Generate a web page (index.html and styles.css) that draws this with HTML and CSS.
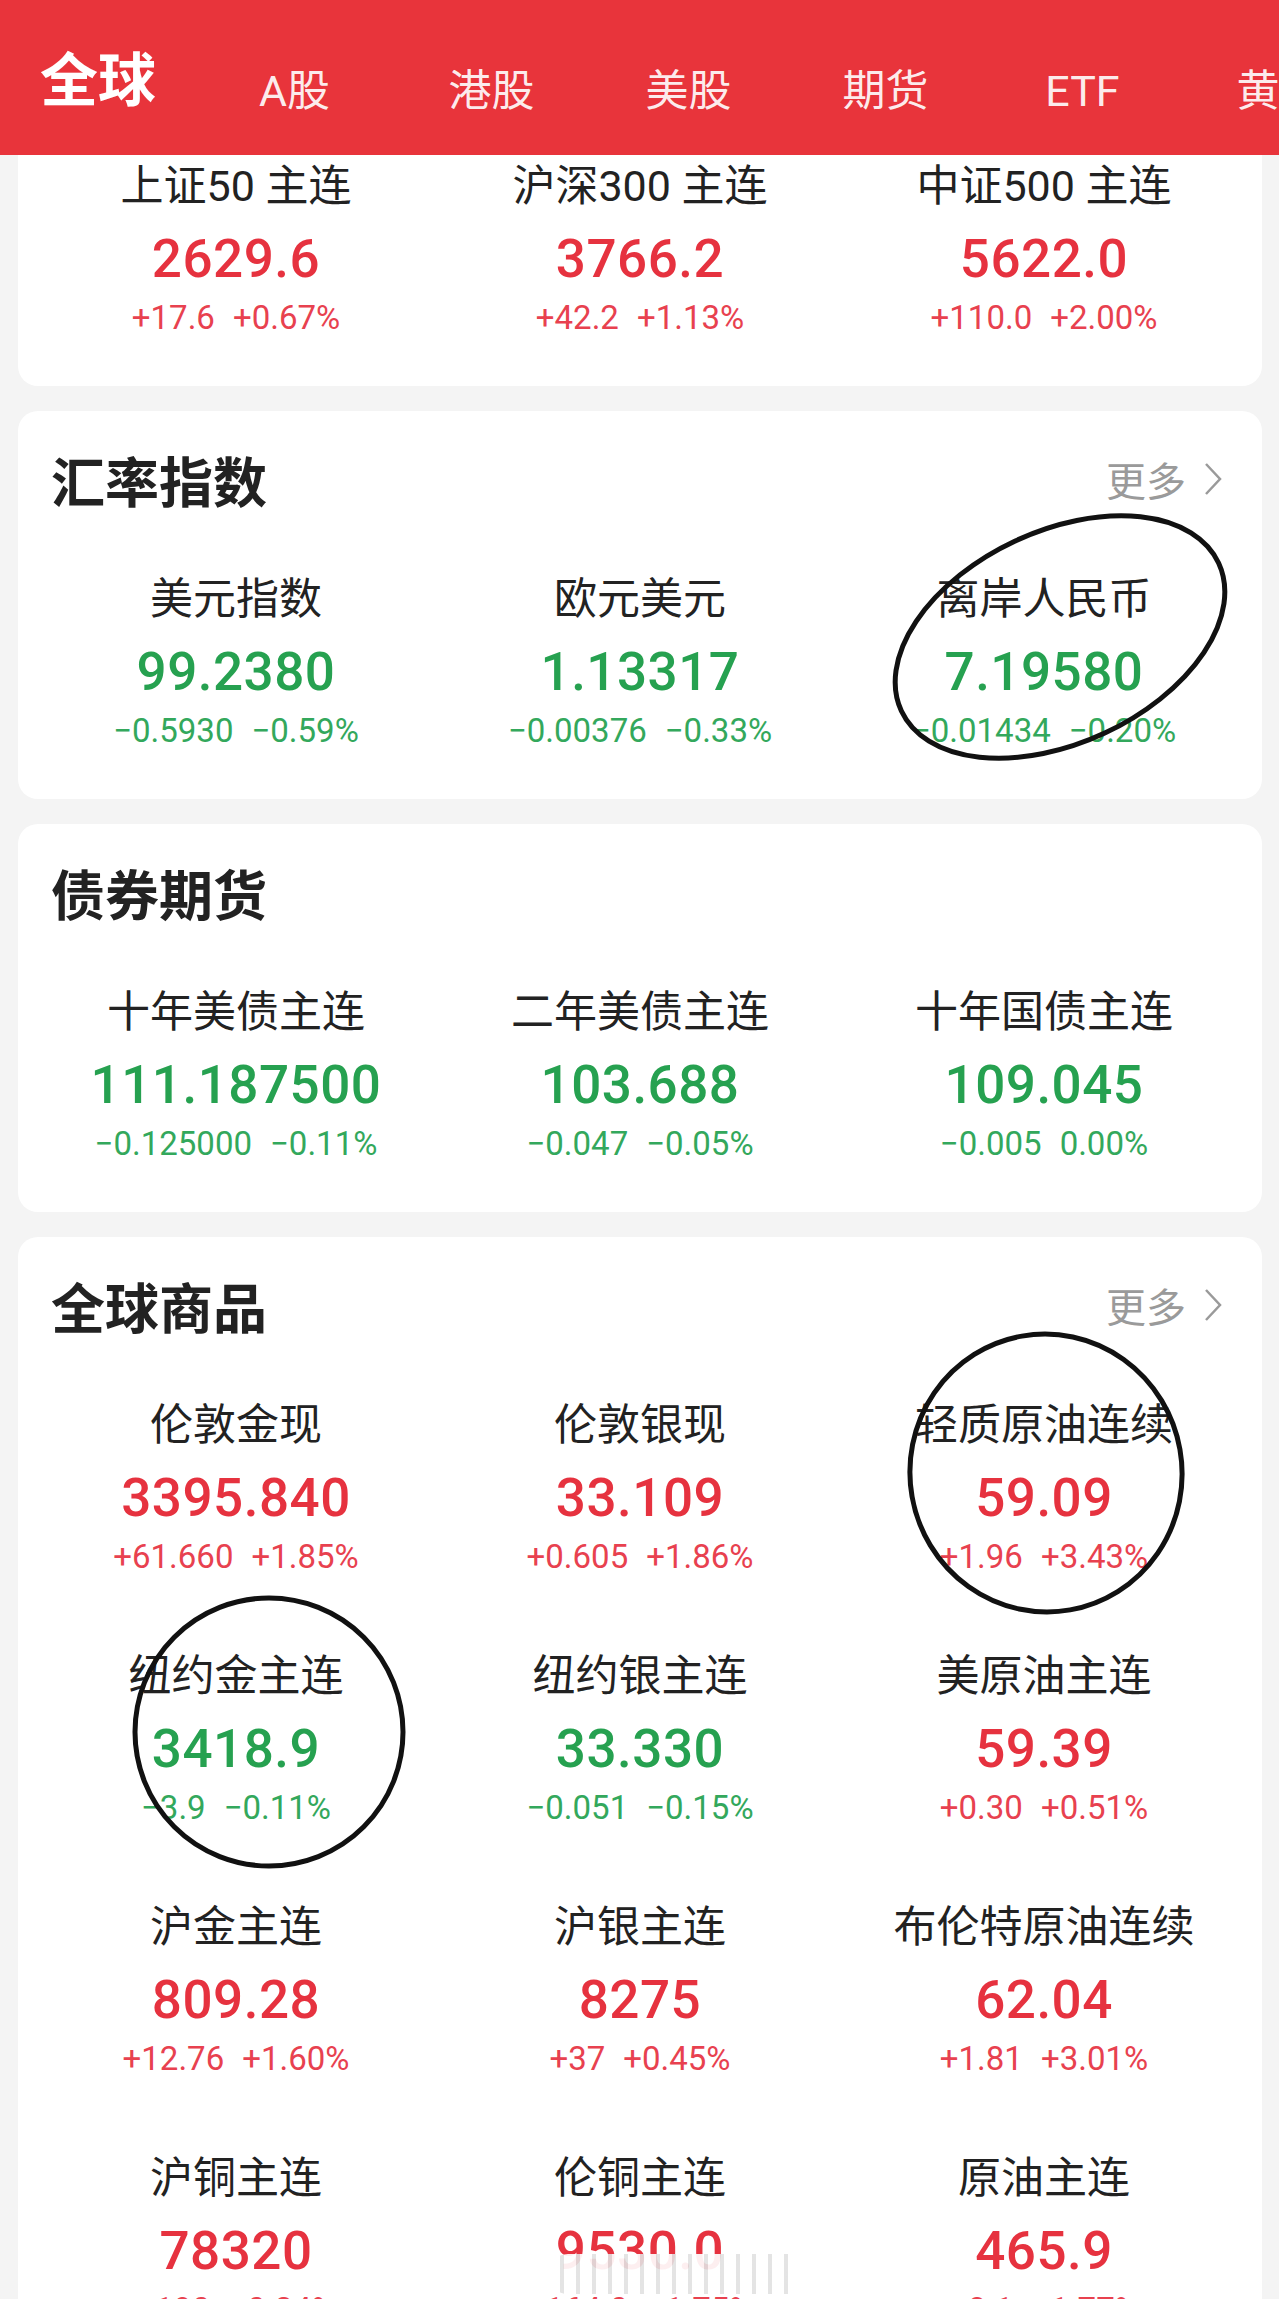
FILE: index.html
```html
<!DOCTYPE html>
<html lang="zh-CN">
<head>
    <meta charset="UTF-8">
    <meta name="viewport" content="width=device-width, initial-scale=1.0">
    <title>全球行情</title>
    <link rel="stylesheet" href="styles.css">
</head>
<body>
    <div class="topbar">
        <span class="brand">全球</span>
        <span class="tab">A股</span>
        <span class="tab">港股</span>
        <span class="tab">美股</span>
        <span class="tab">期货</span>
        <span class="tab">ETF</span>
        <span class="tab">黄金</span>
    </div>

    <div class="page">
        <!-- 股指期货 (已滚动, 标题被遮住) -->
        <section class="card card-first">
            <div class="grid">
                <div class="item up">
                    <div class="name">上证50 主连</div>
                    <div class="price">2629.6</div>
                    <div class="chg"><span>+17.6</span><span>+0.67%</span></div>
                </div>
                <div class="item up">
                    <div class="name">沪深300 主连</div>
                    <div class="price">3766.2</div>
                    <div class="chg"><span>+42.2</span><span>+1.13%</span></div>
                </div>
                <div class="item up">
                    <div class="name">中证500 主连</div>
                    <div class="price">5622.0</div>
                    <div class="chg"><span>+110.0</span><span>+2.00%</span></div>
                </div>
            </div>
        </section>

        <section class="card">
            <div class="card-head">
                <h2>汇率指数</h2>
                <a class="more">更多
                    <svg width="22" height="36" viewBox="0 0 22 36"><polyline points="4,3 18,18 4,33" fill="none" stroke="#9a9a9a" stroke-width="2.5"/></svg>
                </a>
            </div>
            <div class="grid">
                <div class="item down">
                    <div class="name">美元指数</div>
                    <div class="price">99.2380</div>
                    <div class="chg"><span>−0.5930</span><span>−0.59%</span></div>
                </div>
                <div class="item down">
                    <div class="name">欧元美元</div>
                    <div class="price">1.13317</div>
                    <div class="chg"><span>−0.00376</span><span>−0.33%</span></div>
                </div>
                <div class="item down">
                    <div class="name">离岸人民币</div>
                    <div class="price">7.19580</div>
                    <div class="chg"><span>−0.01434</span><span>−0.20%</span></div>
                </div>
            </div>
        </section>

        <section class="card">
            <div class="card-head">
                <h2>债券期货</h2>
            </div>
            <div class="grid">
                <div class="item down">
                    <div class="name">十年美债主连</div>
                    <div class="price">111.187500</div>
                    <div class="chg"><span>−0.125000</span><span>−0.11%</span></div>
                </div>
                <div class="item down">
                    <div class="name">二年美债主连</div>
                    <div class="price">103.688</div>
                    <div class="chg"><span>−0.047</span><span>−0.05%</span></div>
                </div>
                <div class="item down">
                    <div class="name">十年国债主连</div>
                    <div class="price">109.045</div>
                    <div class="chg"><span>−0.005</span><span>0.00%</span></div>
                </div>
            </div>
        </section>

        <section class="card">
            <div class="card-head">
                <h2>全球商品</h2>
                <a class="more">更多
                    <svg width="22" height="36" viewBox="0 0 22 36"><polyline points="4,3 18,18 4,33" fill="none" stroke="#9a9a9a" stroke-width="2.5"/></svg>
                </a>
            </div>
            <div class="grid">
                <div class="item up">
                    <div class="name">伦敦金现</div>
                    <div class="price">3395.840</div>
                    <div class="chg"><span>+61.660</span><span>+1.85%</span></div>
                </div>
                <div class="item up">
                    <div class="name">伦敦银现</div>
                    <div class="price">33.109</div>
                    <div class="chg"><span>+0.605</span><span>+1.86%</span></div>
                </div>
                <div class="item up">
                    <div class="name">轻质原油连续</div>
                    <div class="price">59.09</div>
                    <div class="chg"><span>+1.96</span><span>+3.43%</span></div>
                </div>

                <div class="item down">
                    <div class="name">纽约金主连</div>
                    <div class="price">3418.9</div>
                    <div class="chg"><span>−3.9</span><span>−0.11%</span></div>
                </div>
                <div class="item down">
                    <div class="name">纽约银主连</div>
                    <div class="price">33.330</div>
                    <div class="chg"><span>−0.051</span><span>−0.15%</span></div>
                </div>
                <div class="item up">
                    <div class="name">美原油主连</div>
                    <div class="price">59.39</div>
                    <div class="chg"><span>+0.30</span><span>+0.51%</span></div>
                </div>

                <div class="item up">
                    <div class="name">沪金主连</div>
                    <div class="price">809.28</div>
                    <div class="chg"><span>+12.76</span><span>+1.60%</span></div>
                </div>
                <div class="item up">
                    <div class="name">沪银主连</div>
                    <div class="price">8275</div>
                    <div class="chg"><span>+37</span><span>+0.45%</span></div>
                </div>
                <div class="item up">
                    <div class="name">布伦特原油连续</div>
                    <div class="price">62.04</div>
                    <div class="chg"><span>+1.81</span><span>+3.01%</span></div>
                </div>

                <div class="item up">
                    <div class="name">沪铜主连</div>
                    <div class="price">78320</div>
                    <div class="chg"><span>+190</span><span>+0.24%</span></div>
                </div>
                <div class="item up">
                    <div class="name">伦铜主连</div>
                    <div class="price">9530.0<span class="watermark"></span></div>
                    <div class="chg"><span>+164.0</span><span>+1.75%</span></div>
                </div>
                <div class="item up">
                    <div class="name">原油主连</div>
                    <div class="price">465.9</div>
                    <div class="chg"><span>+8.1</span><span>+1.77%</span></div>
                </div>
            </div>
        </section>
    </div>

    <!-- 手绘圈注 -->
    <svg class="marks" width="1279" height="2299" viewBox="0 0 1279 2299">
        <ellipse cx="1060" cy="637" rx="175" ry="106" transform="rotate(-25 1060 637)" fill="none" stroke="#111" stroke-width="5"/>
        <ellipse cx="1046" cy="1473" rx="136" ry="139" transform="rotate(-10 1046 1473)" fill="none" stroke="#111" stroke-width="5"/>
        <ellipse cx="269" cy="1732" rx="134" ry="134" fill="none" stroke="#111" stroke-width="5"/>
    </svg>
</body>
</html>
```

FILE: styles.css
```css
body {
    margin: 0;
    background-color: #f4f4f4;
    font-family: Roboto, "Noto Sans CJK SC", sans-serif;
    color: #222;
    position: relative;
}

.topbar {
    height: 155px;
    background-color: #e8343b;
    display: flex;
    align-items: flex-start;
    padding-left: 40px;
    box-sizing: border-box;
    overflow: hidden;
    white-space: nowrap;
}

.brand {
    font-size: 58px;
    font-weight: 700;
    color: #fff;
    line-height: 60px;
    margin-top: 51px;
    width: 120px;
    margin-right: 36px;
    flex-shrink: 0;
}

.tab {
    font-size: 43px;
    color: rgba(255, 255, 255, 0.92);
    width: 197px;
    text-align: center;
    flex-shrink: 0;
    line-height: 44px;
    margin-top: 69px;
}

.page {
    padding: 0 17px 0 18px;
    display: flex;
    flex-direction: column;
    gap: 25px;
}

.card {
    background: #fff;
    border-radius: 20px;
    padding: 38px 16px 48px;
}

.card-first {
    border-radius: 0 0 20px 20px;
    padding-top: 7px;
}

.card-head {
    display: flex;
    justify-content: space-between;
    align-items: center;
    height: 60px;
    padding: 0 22px 0 17px;
    margin-bottom: 66px;
}

.card-head h2 {
    margin: 0;
    font-size: 54px;
    font-weight: 700;
    color: #222;
}

.more {
    display: flex;
    align-items: center;
    gap: 16px;
    font-size: 40px;
    color: #9a9a9a;
}

.grid {
    display: grid;
    grid-template-columns: repeat(3, 1fr);
    row-gap: 75px;
}

.item {
    text-align: center;
}

.name {
    font-size: 43px;
    line-height: 48px;
    color: #222;
}

.price {
    font-size: 53px;
    font-weight: 500;
    line-height: 70px;
    margin-top: 14px;
    letter-spacing: 0.5px;
    position: relative;
}

.chg {
    font-size: 33px;
    line-height: 40px;
    margin-top: 4px;
}

.chg span + span {
    margin-left: 18px;
}

.up .price {
    color: #e6323f;
}

.up .chg {
    color: #e8414f;
}

.down .price {
    color: #26a150;
}

.down .chg {
    color: #33a85c;
}

.watermark {
    position: absolute;
    left: 110px;
    top: 38px;
    width: 250px;
    height: 40px;
    border-radius: 20px 0 0 20px;
    background: repeating-linear-gradient(90deg, rgba(255,255,255,0.92) 0 12px, rgba(225,225,225,0.9) 12px 16px);
}

.marks {
    position: absolute;
    left: 0;
    top: 0;
    pointer-events: none;
}
```
